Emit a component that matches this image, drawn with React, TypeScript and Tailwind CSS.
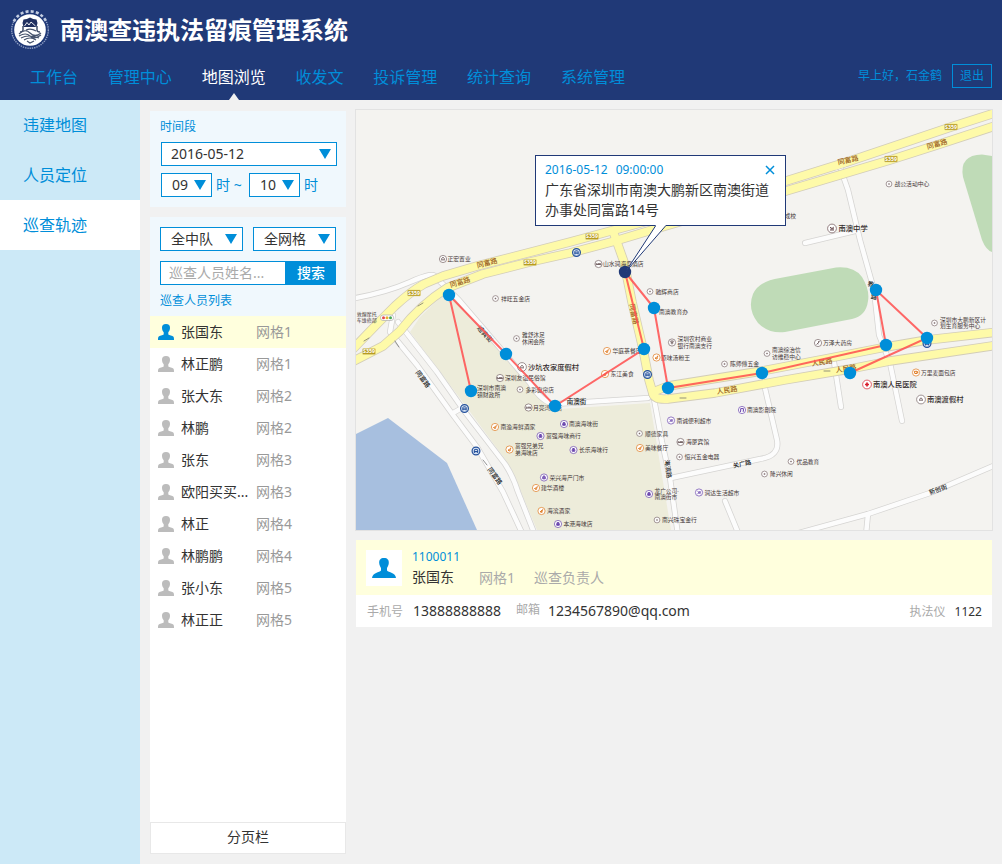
import React from "react";

const NAV = ["工作台", "管理中心", "地图浏览", "收发文", "投诉管理", "统计查询", "系统管理"];
const SIDE = ["违建地图", "人员定位", "巡查轨迹"];

const PEOPLE: [string, string][] = [
  ["张国东", "网格1"],
  ["林正鹏", "网格1"],
  ["张大东", "网格2"],
  ["林鹏", "网格2"],
  ["张东", "网格3"],
  ["欧阳买买...", "网格3"],
  ["林正", "网格4"],
  ["林鹏鹏", "网格4"],
  ["张小东", "网格5"],
  ["林正正", "网格5"],
];

function Person({ className }: { className: string }) {
  return (
    <svg viewBox="0 0 16 16" className={className} fill="currentColor">
      <path d="M8 0C5.200 0 3.900 1.600 4 4C4.100 6 5 7.600 5.700 8.300V10.400C5 11 1.300 11.400 0.500 12.800C0 13.700 0 15 0 16H16C16 15 16 13.700 15.500 12.800C14.700 11.400 11 11 10.300 10.400V8.300C11 7.600 11.900 6 12 4C12.100 1.600 10.800 0 8 0Z" />
    </svg>
  );
}

function Arrow() {
  return (
    <svg viewBox="0 0 12 10" className="h-[10px] w-3 shrink-0 fill-[#008ed9]">
      <path d="M0 0H12L6 10Z" />
    </svg>
  );
}

function Select({ label, className }: { label: string; className: string }) {
  return (
    <div className={`flex h-6 items-center justify-between border border-[#008ed9] bg-white text-sm leading-[22px] text-[#333] ${className}`}>
      <span>{label}</span>
      <Arrow />
    </div>
  );
}

function Logo() {
  return (
    <svg viewBox="0 0 40 40" className="h-10 w-10 shrink-0">
      <circle cx="20" cy="20" r="18.300" fill="none" stroke="#8f9fc4" strokeWidth="1.400" strokeDasharray="1.400 0.900" />
      <path d="M3.800 11.500A18 18 0 0 1 36.200 11.500" fill="none" stroke="#203977" strokeWidth="4" />
      <path d="M3.800 11.500A18 18 0 0 1 36.200 11.500" fill="none" stroke="#c3cde1" strokeWidth="2.600" strokeDasharray="3 2.200" />
      <circle cx="20" cy="20" r="15.800" fill="#fff" />
      <path d="M13.500 9.500Q17 9.500 20 7.500Q23 9.500 26.500 9.500L27.500 13L26.500 17H13.500L12.500 13Z" fill="#203060" />
      <path d="M14.500 16L17 12.500L19 15L21 12L25.500 16" fill="none" stroke="#fff" strokeWidth="0.900" />
      <path d="M13 16V20Q13 22 10 22M27 16V20Q27 22 30 22" fill="none" stroke="#46536c" strokeWidth="1.500" />
      <path d="M9 24Q15 18 20 23T31 23M9 26Q16 22 20 26T31 25M11 28Q18 24 29 28M14 30Q20 26 26 30M16 20Q21 18 26 21M17 31L20 33L24 31" fill="none" stroke="#46536c" strokeWidth="1.200" />
    </svg>
  );
}

type Kind = "dot" | "bed" | "food" | "bag" | "shop" | "home" | "bank" | "pen" | "cross" | "school" | "cup" | "music";
const TONE: Record<Kind, string> = {
  dot: "#806f70", bed: "#776667", food: "#e07a20", bag: "#6a45ad", shop: "#6a45ad", home: "#776667",
  bank: "#776667", pen: "#776667", cross: "#d81e2c", school: "#684c50", cup: "#e07a20", music: "#6a45ad",
};
const GLYPH: Record<Kind, string> = {
  dot: "M-.6 -.6H.6V.6H-.6Z",
  bed: "M-2.300 -1V1.200M-2.300 .5H2.300M2.300 1.200V-.3H-1",
  food: "M-1.500 .5Q1 1.500 1.300 -1.800M-1.500 .5Q0 2.200 1.200 .8M-.5 .1L.6 -1",
  bag: "M-1.300 -.4H1.300V1.300H-1.300ZM-.8 -.6V-1.500H.8V-.6M-1 .5H1",
  shop: "M-1.500 -1.300L1.500 1.300M-1.500 1.300L.5 -.2M.4 -1H1.500M.8 .9L1.800 -.2",
  home: "M-1.800 0L0 -1.700L1.800 0M-1.200 0V1.500M1.200 0V1.500M0 0V1.500",
  bank: "M-1.500 -1.400L0 .2L1.500 -1.400M0 0V1.900M-1.400 .4H1.400M-1.400 -1.500H1.400",
  pen: "M-1.500 1.500L1.400 -1.300M0 -1.300H1.500M-1 .5L.5 1",
  cross: "M0 -2V2M-2 0H2",
  school: "M-2 1.500H2M-2 -1.300L0 0L1.800 -1.400M-1.500 .5L2 .3",
  cup: "M-1.600 -1.200H1V1H-1.200ZM1 -.6H1.900V.3H1",
  music: "M-1.300 1.300V-1.400H1.400V1.200M-2 1.400H-1M.7 1.300H1.700",
};

// icon kind, icon x, icon y, label x, lines, font size
type Poi = [Kind, number, number, number, string[], number];
const POIS: Poi[] = [
  ["home", 443, 259, 447.500, ["正宏置业"], 5.800],
  ["dot", 495.500, 298.500, 501, ["祥旺五金店"], 5.800],
  ["dot", 516.500, 338.500, 522, ["雅舒沐足", "休闲会所"], 5.700],
  ["home", 522, 367, 528, ["沙坑农家度假村"], 7.300],
  ["bed", 500, 378, 505, ["深圳友谊民俗馆"], 5.800],
  ["dot", 520, 389.500, 525.500, ["多彩窗帘店"], 5.700],
  ["bed", 528.500, 407.500, 533, ["月亮湾酒店"], 5.800],
  ["food", 495, 427, 500.500, ["南渔海鲜酒家"], 5.800],
  ["food", 509.500, 449.500, 515, ["富强兄弟兄", "弟海味店"], 5.700],
  ["bag", 564, 424, 569, ["南澳海味街"], 5.800],
  ["bag", 540.500, 436, 546, ["富强海味商行"], 5.800],
  ["bag", 573.500, 450, 579, ["长乐海味行"], 5.800],
  ["bag", 544, 477.500, 549.500, ["荣兴海产门市"], 5.800],
  ["food", 536, 488, 541, ["建华酒楼"], 5.800],
  ["food", 541.500, 511, 547, ["海滨酒家"], 5.800],
  ["bag", 558, 524, 563.500, ["本港海味店"], 5.800],
  ["bed", 598.500, 264, 603, ["山水润海度酒店"], 5.800],
  ["dot", 650, 291.500, 655.500, ["驰辉商店"], 5.800],
  ["bank", 672, 342.500, 677.500, ["深圳农村商业", "银行南澳支行"], 5.750],
  ["food", 607, 351, 612.500, ["华庭茶餐厅"], 5.800],
  ["food", 656.500, 357.500, 661, ["原味汤粉王"], 5.800],
  ["food", 605, 374, 610.500, ["东江美食"], 5.800],
  ["dot", 724.500, 364, 730, ["陈师傅五金"], 5.800],
  ["dot", 767, 353.500, 772, ["南澳综治信", "访维稳中心"], 5.750],
  ["pen", 818, 343, 823, ["万泽大药房"], 5.800],
  ["music", 742, 410, 747, ["南澳影剧院"], 5.800],
  ["shop", 671, 420.500, 676.500, ["南诚便利超市"], 5.800],
  ["dot", 639.500, 433.500, 645, ["顺德家具"], 5.800],
  ["bed", 680.500, 442, 686, ["海厦宾馆"], 5.800],
  ["food", 640, 448, 645, ["美味餐厅"], 5.800],
  ["dot", 679.500, 457, 684.500, ["恒兴五金电器"], 5.800],
  ["bag", 649, 494, 654.500, ["龙广公司·", "南澳街市"], 5.700],
  ["shop", 699, 492.500, 704.500, ["润达生活超市"], 5.800],
  ["dot", 657, 520, 662, ["南兴珠宝金行"], 5.800],
  ["dot", 764.500, 474, 770, ["隆兴休闲"], 5.700],
  ["dot", 791, 461.500, 796.500, ["优品教育"], 5.700],
  ["dot", 889, 184, 894.500, ["战公活动中心"], 5.800],
  ["school", 832, 228.500, 838.500, ["南澳中学"], 7.300],
  ["dot", 934.500, 323, 940, ["深圳市大鹏新区计", "划生育服务中心"], 5.750],
  ["cup", 916, 372.500, 921, ["万里麦面包店"], 5.750],
  ["cross", 867, 384.500, 873, ["南澳人民医院"], 7.300],
  ["home", 921, 399.500, 927, ["南澳渡假村"], 7.300],
];

const YELLOW = [
  "M350 352L378 323L395 306Q410 292 424 284L443 276L477 266L570 242L655 219L786 181L847 162L951 127L998 112",
  "M350 363L383 346L400 331Q420 305 447 288L483 274L530 262L570 253L615 241L655 229L786 191L890 160L937 145L998 125",
  "M613 231L624 262L632 302L643 349L649 380L653 394",
  "M653 392L668 386L762 371L830 358L886 347L927 340L998 332",
  "M653 393Q654 400 668 399L715 393L785 380L850 369L890 361L998 345",
];
const WHITE = [
  "M350 299Q385 293 410 282T435 277L446 287",
  "M446 287L458 299L530 383Q542 403 555 404L648 398",
  "M393 315L390 332L417 365L453 415L477 447L503 492L523 535",
  "M398 322L437 372L465 412L505 464Q513 476 518 492L535 535",
  "M453 413L462 408",
  "M654 399L662 442L670 478L678 535",
  "M671 478L760 459Q780 456 777 440L764 384",
  "M725 501L739 535",
  "M840 167L848 190L860 240L874 290L879 335L890 363L902 421",
  "M805 243L855 231",
  "M834 362L841 407",
  "M795 534L868 514L930 493L1000 463",
  "M868 514L866 535",
];
const TRACK: [number, number][] = [
  [471, 391], [449, 295], [506, 354], [555, 406], [644, 349], [625, 272], [654, 308],
  [668, 388], [762, 373], [886, 345], [876, 290], [927, 338], [850, 373],
];
const SHIELDS: [number, number][] = [[414, 293], [369, 351.500], [530, 262.500], [592, 236.500], [951, 127], [891, 159]];
const STOPS: [number, number][] = [[464.500, 408.500], [476, 451], [576.500, 252.500], [647.500, 374.500], [927, 343.500]];
// text, centre x, centre y, rotation, font size, colour
const STREETS: [string, number, number, number, number, string][] = [
  ["同富路", 487, 263, -14, 7, "#9a6020"],
  ["同富路", 460, 282, -17, 7, "#9a6020"],
  ["同富路", 848, 160, -12, 7, "#9a6020"],
  ["同富路", 937, 144, -15, 7, "#9a6020"],
  ["同富路", 634, 314, 78, 7, "#9a6020"],
  ["人民路", 727, 390, -8, 7, "#9a6020"],
  ["人民路", 822, 362, -8, 7, "#9a6020"],
  ["人民路", 846, 368.500, -8, 7, "#9a6020"],
  ["迎宾街", 485, 334, 48, 6.500, "#333"],
  ["同富路", 423, 379, 54, 6.500, "#222"],
  ["同富路", 495, 476, 54, 6.500, "#222"],
  ["南澳街", 576.500, 402, 0, 6.500, "#222"],
  ["海滨路", 668, 469, 83, 6.200, "#222"],
  ["关广路", 742, 464, -12, 6.200, "#222"],
  ["新创街", 938, 489.500, -20, 6.200, "#222"],
  ["教", 871, 284, 10, 6.200, "#222"],
  ["路", 874, 297, 10, 6.200, "#222"],
];

function MapView() {
  return (
    <svg viewBox="356 110 636 420" className="block h-[420px] w-[636px]">
      <rect x="356" y="110" width="636" height="420" fill="#f4f3f0" />
      <path d="M356 434L388 418L447 463L477 530H356Z" fill="#a7bfdf" />
      <path d="M447 291L420 317L410 332L465 405L507 462L518 485L537 530H671L650 403L560 409L535 393L458 297Z" fill="#edecda" />
      <path d="M780 278L836 267.500Q854 266 862 277Q870 290 868 301Q866 316 852 319L785 332Q769 334 758 323Q747 309 753 294Q759 281 780 278Z" fill="#bfdbb7" />
      <path d="M992 156L982 154.500Q959 155 963 177L982 240Q986 250 992 252Z" fill="#bfdbb7" />
      <g fill="none" strokeLinejoin="round" strokeLinecap="round">
        {WHITE.map((d) => <path key={d} d={d} stroke="#d5d4d2" strokeWidth="6" />)}
        {WHITE.map((d) => <path key={d} d={d} stroke="#fcfcfc" strokeWidth="4.500" />)}
        {YELLOW.map((d) => <path key={d} d={d} stroke="#d3cdb8" strokeWidth="9.400" />)}
        <path d="M836 168L845 165M612 234L616 243" stroke="#fcfcfc" strokeWidth="3" />
        {YELLOW.map((d) => <path key={d} d={d} stroke="#fefaa9" strokeWidth="7.800" />)}
        <path d="M418 306L423 303M364 341L369 338M680 398H686M824 371H830M395 341L399 347M483 460L487 465" stroke="#666" strokeWidth="0.700" />
      </g>
      {SHIELDS.map(([x, y]) => (
        <g key={x}>
          <rect x={x - 6.500} y={y - 3} width="13" height="6" rx="1" fill="#b79b22" stroke="#e1d58c" strokeWidth="0.500" />
          <text x={x} y={y + 1.900} fontSize="5.200" fontWeight="700" fill="#fff" textAnchor="middle">S359</text>
        </g>
      ))}
      <rect x="380.500" y="315" width="13" height="5.500" rx="2.500" fill="#fff" stroke="#aaa" strokeWidth="0.700" />
      <circle cx="383.500" cy="317.800" r="1.500" fill="#e5484d" />
      <circle cx="387" cy="317.800" r="1.500" fill="#e8b030" />
      <circle cx="390.500" cy="317.800" r="1.500" fill="#48a858" />
      {STREETS.map(([t, x, y, r, s, c], i) => (
        <text key={i} transform={`translate(${x} ${y}) rotate(${r})`} y={s * 0.36} fontSize={s} fontWeight="500" fill={c} textAnchor="middle">{t}</text>
      ))}
      <g fontSize="5.800" fill="#443838">
        <text x="356.800" y="315.500" fontSize="5">敦煌摩托</text>
        <text x="356.800" y="321.500" fontSize="5">车维修部</text>
        <text x="784.500" y="217.500">成校</text>
        <text x="477" y="390">深圳市南澳</text>
        <text x="477" y="396.500">镇财政所</text>
        <text x="659" y="313.500">南澳教育办</text>
      </g>
      {POIS.map(([kind, x, y, tx, lines, s]) => (
        <g key={lines[0] + x}>
          <circle cx={x} cy={y} r={s > 7 ? 4.400 : kind === "dot" ? 2.900 : 3.600} fill="#fff" stroke={TONE[kind]} strokeWidth="0.700" />
          <path d={GLYPH[kind]} transform={`translate(${x} ${y})`} fill={kind === "dot" ? TONE[kind] : "none"} stroke={TONE[kind]} strokeWidth={kind === "cross" ? 1.700 : kind === "dot" ? 0.300 : 1} />
          {lines.map((t, i) => (
            <text key={t} x={tx} y={y + s * 0.36 + (lines.length > 1 ? (i - 0.500) * 6.200 : 0)} fontSize={s} fontWeight={s > 7 ? 500 : 400} fill={s > 7 ? "#332b2b" : "#443838"}>{t}</text>
          ))}
        </g>
      ))}
      {STOPS.map(([x, y]) => (
        <g key={x} transform={`translate(${x} ${y})`}>
          <circle r="3.900" fill="#d8e4f4" stroke="#24509b" strokeWidth="1.200" />
          <path d="M-2.200 1.900V-.7Q-2.200 -2.200 0 -2.200T2.200 -.7V1.900H1.200V1.200H-1.200V1.900Z" fill="#24509b" />
          <path d="M-1.200 -.6H1.200" stroke="#fff" strokeWidth="0.900" />
        </g>
      ))}
      <polyline points={TRACK.map((p) => p.join(",")).join(" ")} fill="none" stroke="#ff4d4d" strokeOpacity="0.850" strokeWidth="2" />
      {TRACK.map(([x, y]) => (
        <circle key={x} cx={x} cy={y} r="6.200" fill={x === 625 ? "#203977" : "#008ed9"} />
      ))}
    </svg>
  );
}

function Callout() {
  return (
    <div className="absolute left-[179px] top-[45px] h-[71px] w-[251px] border border-[#203977] bg-white px-[9px] pt-1">
      <div className="flex h-5 items-center justify-between text-xs leading-5 text-[#008ed9]">
        <span className="flex gap-2">
          <span>2016-05-12</span>
          <span>09:00:00</span>
        </span>
        <svg viewBox="0 0 10 10" className="mr-[1px] h-[10px] w-[10px] fill-none stroke-[#008ed9] stroke-[1.500]">
          <path d="M1 1L9 9M9 1L1 9" />
        </svg>
      </div>
      <p className="whitespace-nowrap text-sm leading-5 text-[#333]">
        广东省深圳市南澳大鹏新区南澳街道
        <br />
        办事处同富路14号
      </p>
      <svg viewBox="0 0 44 48" className="absolute left-[88px] top-[69px] h-12 w-11">
        <path d="M32 0L1.500 47L42 0Z" fill="#fff" />
        <path d="M31.500 1L1.500 47L41.500 1" fill="none" stroke="#203977" />
      </svg>
    </div>
  );
}

export default function App() {
  return (
    <div className="flex h-[864px] w-[1002px] flex-col overflow-hidden bg-[#f1f1f1] font-['Noto_Sans','Noto_Sans_CJK_SC',sans-serif] text-[#333]">
      <header className="flex h-[100px] shrink-0 flex-col bg-[#203977]">
        <div className="flex h-[60px] items-center gap-[10px] pl-[10px]">
          <Logo />
          <h1 className="text-2xl font-bold leading-[60px] text-white">南澳查违执法留痕管理系统</h1>
        </div>
        <div className="flex h-10 justify-between pl-[30px] pr-[10px]">
          <nav className="flex gap-[29.800px] text-base leading-[34px] text-[#008ed9]">
            {NAV.map((n) => (
              <div key={n} className={n === "地图浏览" ? "flex flex-col items-center justify-between text-white" : ""}>
                <span className="block h-[33px]">{n}</span>
                {n === "地图浏览" && (
                  <svg viewBox="0 0 10 7" className="h-[7px] w-[10px] fill-[#f1f1f1]"><path d="M5 0L10 7H0Z" /></svg>
                )}
              </div>
            ))}
          </nav>
          <div className="flex items-start gap-[10px] pt-1 text-xs leading-6 text-[#008ed9]">
            <span>早上好，石金鹤</span>
            <button className="h-6 w-10 border border-[#008ed9] leading-[22px]">退出</button>
          </div>
        </div>
      </header>
      <div className="flex min-h-0 flex-1">
        <aside className="w-[140px] shrink-0 bg-[#cce9f7] text-base text-[#008ed9]">
          {SIDE.map((s) => (
            <div key={s} className={`h-[50px] pl-[23px] leading-[51px] ${s === "巡查轨迹" ? "bg-white" : ""}`}>{s}</div>
          ))}
        </aside>
        <section className="ml-[10px] mt-[11px] flex h-[743px] w-[196px] shrink-0 flex-col">
          <div className="h-24 bg-[#f0f8fd] pl-[11px] pt-[6px]">
            <p className="-ml-px text-xs leading-[19px] text-[#008ed9]">时间段</p>
            <Select label="2016-05-12" className="mt-[6px] w-[176px] pl-[9px] pr-[5px]" />
            <div className="mt-[7px] flex items-center text-sm leading-6 text-[#008ed9]">
              <Select label="09" className="w-[51px] pl-[10px] pr-[5px]" />
              <span className="w-[37px] whitespace-pre pl-1">时 ~</span>
              <Select label="10" className="w-[51px] pl-[10px] pr-[5px]" />
              <span className="pl-1">时</span>
            </div>
          </div>
          <div className="mt-[10px] h-[99px] bg-[#f0f8fd] px-[10px] pt-[10px]">
            <div className="flex justify-between">
              <Select label="全中队" className="w-[83px] pl-[10px] pr-[5px]" />
              <Select label="全网格" className="w-[83px] pl-[10px] pr-[5px]" />
            </div>
            <div className="mt-[10px] flex h-6 text-sm leading-[22px]">
              <div className="w-[125px] border border-r-0 border-[#008ed9] bg-white pl-2 text-[#aaa]">巡查人员姓名...</div>
              <button className="w-[51px] bg-[#008ed9] pl-px font-medium leading-6 text-white">搜索</button>
            </div>
            <p className="mt-[6px] text-xs leading-5 text-[#008ed9]">巡查人员列表</p>
          </div>
          <ul className="flex-1 bg-white text-sm">
            {PEOPLE.map(([name, grid], i) => (
              <li key={name} className={`flex h-8 items-center pl-2 leading-8 ${i === 0 ? "bg-[#ffffdd]" : ""}`}>
                <Person className={`h-4 w-4 shrink-0 ${i === 0 ? "text-[#008ed9]" : "text-[#bcbcbc]"}`} />
                <span className="w-[82px] shrink-0 whitespace-nowrap pl-[7px]">{name}</span>
                <span className="text-[#999]">{grid}</span>
              </li>
            ))}
          </ul>
          <div className="h-8 border border-[#e8e8e8] bg-white text-center text-sm leading-[28px]">分页栏</div>
        </section>
        <main className="ml-[9px] mt-[9px] w-[638px] shrink-0">
          <div className="relative border border-[#e2e2e2]">
            <MapView />
            <Callout />
          </div>
          <div className="mx-px mt-[9px]">
            <div className="flex h-[55px] bg-[#ffffdd] pl-[10px] pt-[10px]">
              <div className="flex h-9 w-9 items-center justify-center bg-white text-[#008ed9]">
                <svg viewBox="0 0 24 20" className="h-5 w-6" fill="currentColor">
                  <path d="M12 0C8.500 0 7 2 7.200 5C7.300 7 8.300 8.800 9 10V12.500C7.500 14.500 0.500 14.500 0 20H24C23.500 14.500 16.500 14.500 15 12.500V10C15.700 8.800 16.700 7 16.800 5C17 2 15.500 0 12 0Z" />
                </svg>
              </div>
              <div className="-mt-[3px] ml-[10px]">
                <p className="text-xs leading-5 text-[#008ed9]">1100011</p>
                <p className="flex text-sm leading-5 text-[#aaa]">
                  <span className="w-[67px] text-[#333]">张国东</span>
                  <span className="w-[55px] leading-[22px]">网格1</span>
                  <span className="leading-[22px]">巡查负责人</span>
                </p>
              </div>
            </div>
            <div className="flex h-8 bg-white pl-[11px] pr-[10px] text-xs leading-[34px] text-[#aaa]">
              <span className="w-[46px]">手机号</span>
              <span className="w-[103px] text-sm leading-8 text-[#333]">13888888888</span>
              <span className="w-[32px] leading-[30px]">邮箱</span>
              <span className="flex-1 text-sm leading-8 text-[#333]">1234567890@qq.com</span>
              <span>执法仪</span>
              <span className="ml-[9px] text-[#333]">1122</span>
            </div>
          </div>
        </main>
      </div>
    </div>
  );
}
